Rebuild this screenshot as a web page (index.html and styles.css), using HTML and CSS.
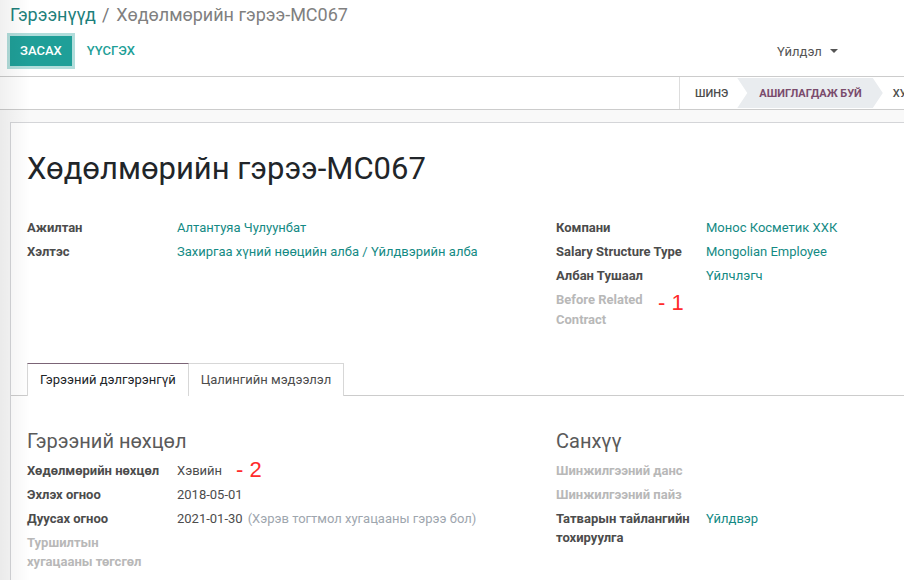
FILE: index.html
```html
<!DOCTYPE html>
<html lang="mn">
<head>
<meta charset="utf-8">
<title>Хөдөлмөрийн гэрээ-MC067</title>
<link rel="stylesheet" href="styles.css">
</head>
<body>
<div class="app">
  <div class="shade"></div>
  <header class="cp">
    <div class="crumbs">
      <a class="crumb-link">Гэрээнүүд</a><span class="sep">/</span><span class="crumb-cur">Хөдөлмөрийн гэрээ-MC067</span>
    </div>
    <div class="cp-row">
      <div class="cp-left">
        <button class="btn btn-primary">Засах</button>
        <button class="btn btn-secondary">Үүсгэх</button>
      </div>
      <div class="cp-right">
        <span class="dropdown">Үйлдэл<span class="caret"></span></span>
      </div>
    </div>
  </header>

  <div class="statusbar">
    <div class="status-list">
      <span class="st st-first">Шинэ</span>
      <span class="st st-active">Ашиглагдаж буй</span>
      <span class="st st-next">Хугацаа дууссан</span>
    </div>
  </div>

  <div class="sheet-bg">
    <div class="sheet">
      <h1 class="title">Хөдөлмөрийн гэрээ-MC067</h1>

      <div class="groups top-groups">
        <div class="group">
          <div class="lbl">Ажилтан</div><div class="val"><a class="link">Алтантуяа Чулуунбат</a></div>
          <div class="lbl">Хэлтэс</div><div class="val"><a class="link">Захиргаа хүний нөөцийн алба / Үйлдвэрийн алба</a></div>
        </div>
        <div class="group">
          <div class="lbl">Компани</div><div class="val"><a class="link">Монос Косметик ХХК</a></div>
          <div class="lbl">Salary Structure Type</div><div class="val"><a class="link">Mongolian Employee</a></div>
          <div class="lbl">Албан Тушаал</div><div class="val"><a class="link">Үйлчлэгч</a></div>
          <div class="lbl lbl-empty note-host">Before Related Contract<span class="note note-1">- 1</span></div><div class="val"></div>
        </div>
      </div>

      <div class="notebook">
        <ul class="tabs">
          <li class="tab tab-active">Гэрээний дэлгэрэнгүй</li>
          <li class="tab">Цалингийн мэдээлэл</li>
        </ul>
        <div class="tab-pane">
          <div class="groups">
            <div class="group">
              <h2 class="sep-title">Гэрээний нөхцөл</h2>
              <div class="lbl">Хөдөлмөрийн нөхцөл</div><div class="val">Хэвийн<span class="note note-2">- 2</span></div>
              <div class="lbl">Эхлэх огноо</div><div class="val">2018-05-01</div>
              <div class="lbl">Дуусах огноо</div><div class="val">2021-01-30<span class="placeholder">(Хэрэв тогтмол хугацааны гэрээ бол)</span></div>
              <div class="lbl lbl-empty">Туршилтын хугацааны төгсгөл</div><div class="val"></div>
            </div>
            <div class="group">
              <h2 class="sep-title">Санхүү</h2>
              <div class="lbl lbl-empty">Шинжилгээний данс</div><div class="val"></div>
              <div class="lbl lbl-empty">Шинжилгээний пайз</div><div class="val"></div>
              <div class="lbl">Татварын тайлангийн тохируулга</div><div class="val"><a class="link">Үйлдвэр</a></div>
            </div>
          </div>
        </div>
      </div>
    </div>
  </div>
</div>
</body>
</html>
```

FILE: styles.css
```css
html, body {
  margin: 0;
  overflow: hidden;
}
body {
  font-family: Roboto, "Noto Sans", "Liberation Sans", sans-serif;
  font-size: 13px;
  color: #4c4c4c;
  background: #f9f9f9;
}
.app {
  width: 1120px;
  min-height: 580px;
  position: relative;
}
.shade {
  position: absolute;
  left: 0;
  top: 0;
  bottom: 0;
  width: 30px;
  background: linear-gradient(90deg, rgba(0, 0, 0, 0.06), rgba(0, 0, 0, 0));
  pointer-events: none;
  z-index: 5;
}

/* control panel */
.cp {
  background: #fff;
  height: 77px;
  box-sizing: border-box;
  border-bottom: 1px solid #ccc;
  padding: 2px 10px 0;
}
.crumbs {
  font-size: 18px;
  line-height: 26px;
  white-space: nowrap;
}
.crumb-link {
  color: #1d7f7b;
}
.sep {
  color: #777;
  margin: 0 7px 0 6px;
}
.crumb-cur {
  color: #808080;
}
.cp-row {
  display: grid;
  grid-template-columns: 767px 1fr;
  margin-top: 8px;
  align-items: center;
}
.cp-left {
  display: flex;
  align-items: center;
  gap: 5px;
}
.btn {
  font-family: inherit;
  font-size: 13px;
  font-weight: 500;
  text-transform: uppercase;
  border: 0;
  height: 30px;
  padding: 0 10px;
  line-height: 30px;
  background: transparent;
  cursor: pointer;
}
.btn-primary {
  background: #1f9f98;
  color: #fff;
  box-shadow: 0 0 0 3px rgba(31, 159, 152, 0.35);
}
.btn-secondary {
  color: #1f9f98;
}
.dropdown {
  color: #555;
  font-size: 13px;
  display: inline-flex;
  align-items: center;
}
.caret {
  display: inline-block;
  width: 0;
  height: 0;
  border-left: 4px solid transparent;
  border-right: 4px solid transparent;
  border-top: 4px solid #555;
  margin-left: 8px;
  margin-top: -1px;
}

/* statusbar */
.statusbar {
  background: #fff;
  height: 33px;
  box-sizing: border-box;
  border-bottom: 1px solid #ccc;
  padding: 0 0 0 679px;
}
.status-list {
  display: flex;
  height: 32px;
  border-left: 1px solid #ddd;
}
.st {
  display: flex;
  align-items: center;
  font-size: 11px;
  font-weight: 500;
  text-transform: uppercase;
  color: #4c4c4c;
  white-space: nowrap;
}
.st-first {
  padding: 0 9px 0 15px;
}
.st-active {
  background: #e9ecef;
  color: #7a4b6c;
  font-weight: 700;
  padding: 0 21px 0 22px;
  height: 30px;
  margin: 1px 0;
  clip-path: polygon(0 0, calc(100% - 10px) 0, 100% 50%, calc(100% - 10px) 100%, 0 100%, 10px 50%);
}
.st-next {
  padding: 0 10px;
}

/* sheet */
.sheet-bg {
  padding: 12px 0 0 10px;
}
.sheet {
  background: #fff;
  border: 1px solid #d4d5d8;
  width: 1058px;
  padding: 24px 16px 24px;
}
.title {
  margin: 3px 0 0;
  font-size: 31px;
  line-height: 38px;
  font-weight: 400;
  color: #212529;
}
.groups {
  display: grid;
  grid-template-columns: 529px 529px;
}
.top-groups {
  margin-top: 28px;
}
.group {
  display: grid;
  grid-template-columns: 150px 1fr;
  align-content: start;
}
.lbl, .val {
  line-height: 19.5px;
  padding: 2px 0 2.5px;
}
.lbl {
  font-weight: 700;
  color: #4c4c4c;
  padding-right: 12px;
}
.lbl-empty {
  color: #b8b8b8;
}
.val {
  color: #4c4c4c;
}
.link {
  color: #148a84;
}
.placeholder {
  color: #9ea6ae;
  margin-left: 5px;
}
.note-host {
  position: relative;
}
.note {
  color: #ff2b2b;
  font-family: "Liberation Sans", Arial, sans-serif;
  font-size: 22px;
  font-weight: 400;
  white-space: nowrap;
}
.note-1 {
  position: absolute;
  left: 102px;
  top: 3px;
  line-height: 24px;
}
.note-2 {
  margin-left: 14px;
  vertical-align: -2px;
  line-height: 10px;
}

/* notebook */
.notebook {
  margin-top: 31px;
}
.tabs {
  list-style: none;
  margin: 0 -16px;
  padding: 0 16px;
  display: flex;
  border-bottom: 1px solid #ccc;
}
.tab {
  border: 1px solid #d7d7d7;
  border-bottom: 0;
  padding: 6px 12px;
  line-height: 20px;
  margin-bottom: -1px;
  background: #fff;
  color: #4c4c4c;
}
.tab + .tab {
  margin-left: -1px;
}
.tab-active {
  border-top-color: #7b6476;
  color: #212529;
  position: relative;
  z-index: 1;
}
.sep-title {
  grid-column: 1 / -1;
  margin: 33px 0 6px;
  font-size: 20px;
  line-height: 24px;
  font-weight: 400;
  color: #5a5a5a;
}
```
